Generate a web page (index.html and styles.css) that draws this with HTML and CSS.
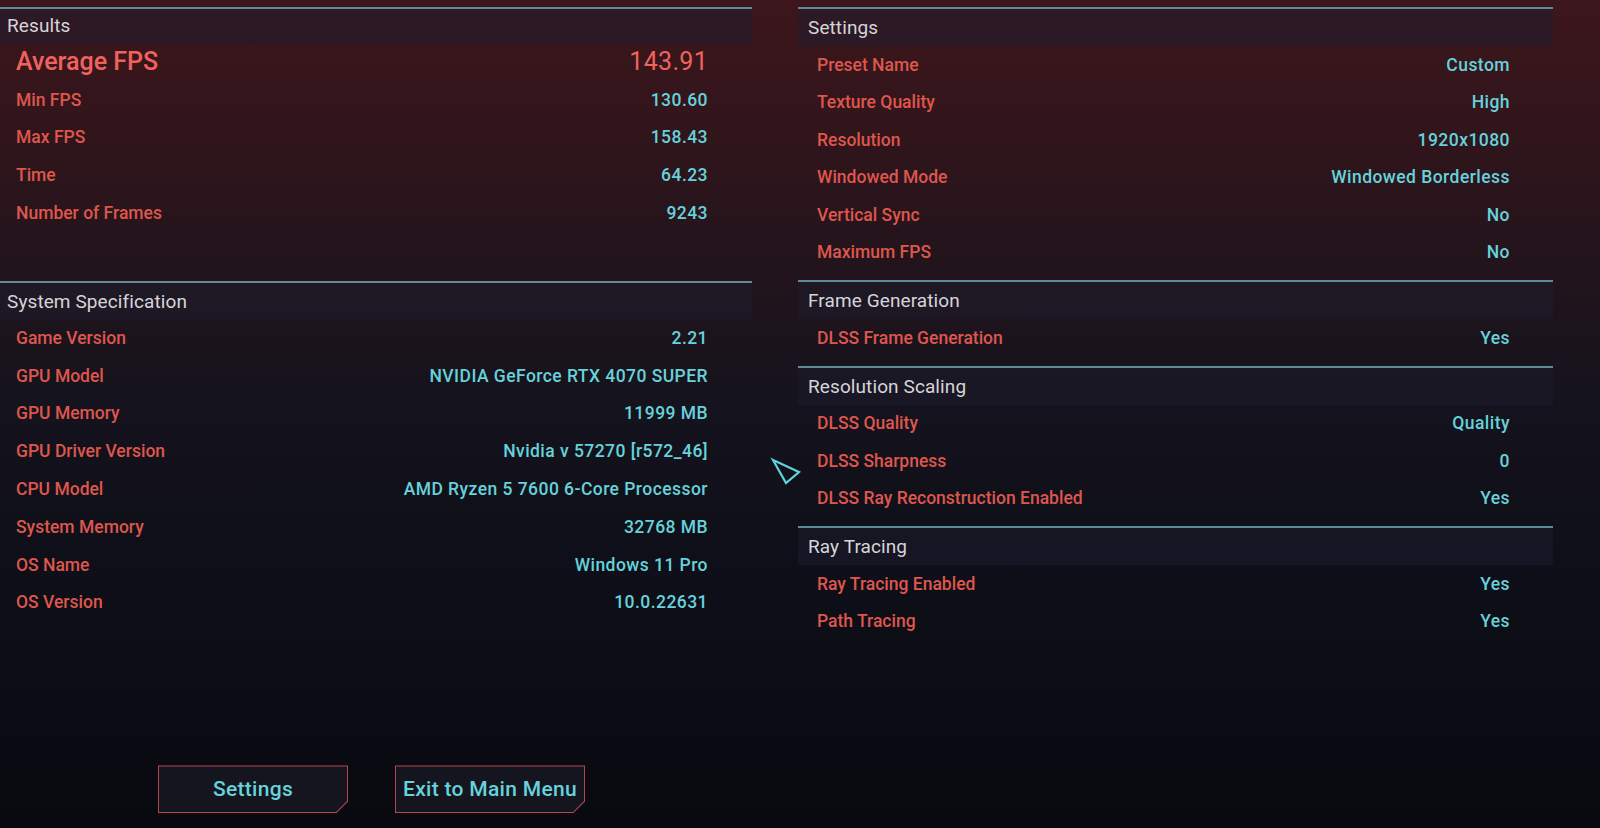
FILE: index.html
```html
<!DOCTYPE html>
<html lang="en">
<head>
    <meta charset="UTF-8">
    <title>Benchmark Results</title>
    <link rel="stylesheet" href="styles.css">
</head>
<body>

    <div class="screen">

        <!-- Left column: results + system spec -->
        <div class="column column-left">
            <section class="panel panel-results">
                <h2 class="panel-title">Results</h2>
                <div class="row row-main"><span class="label">Average FPS</span><span class="value">143.91</span></div>
                <div class="row"><span class="label">Min FPS</span><span class="value">130.60</span></div>
                <div class="row"><span class="label">Max FPS</span><span class="value">158.43</span></div>
                <div class="row"><span class="label">Time</span><span class="value">64.23</span></div>
                <div class="row"><span class="label">Number of Frames</span><span class="value">9243</span></div>
            </section>

            <section class="panel">
                <h2 class="panel-title">System Specification</h2>
                <div class="row"><span class="label">Game Version</span><span class="value">2.21</span></div>
                <div class="row"><span class="label">GPU Model</span><span class="value">NVIDIA GeForce RTX 4070 SUPER</span></div>
                <div class="row"><span class="label">GPU Memory</span><span class="value">11999 MB</span></div>
                <div class="row"><span class="label">GPU Driver Version</span><span class="value">Nvidia v 57270 [r572_46]</span></div>
                <div class="row"><span class="label">CPU Model</span><span class="value">AMD Ryzen 5 7600 6-Core Processor</span></div>
                <div class="row"><span class="label">System Memory</span><span class="value">32768 MB</span></div>
                <div class="row"><span class="label">OS Name</span><span class="value">Windows 11 Pro</span></div>
                <div class="row"><span class="label">OS Version</span><span class="value">10.0.22631</span></div>
            </section>

            <div class="actions">
                <button class="cut-btn"><span class="cut-btn-inner">Settings</span></button>
                <button class="cut-btn"><span class="cut-btn-inner">Exit to Main Menu</span></button>
            </div>
        </div>

        <!-- Right column: settings used -->
        <div class="column column-right">
            <section class="panel">
                <h2 class="panel-title">Settings</h2>
                <div class="row"><span class="label">Preset Name</span><span class="value">Custom</span></div>
                <div class="row"><span class="label">Texture Quality</span><span class="value">High</span></div>
                <div class="row"><span class="label">Resolution</span><span class="value">1920x1080</span></div>
                <div class="row"><span class="label">Windowed Mode</span><span class="value">Windowed Borderless</span></div>
                <div class="row"><span class="label">Vertical Sync</span><span class="value">No</span></div>
                <div class="row"><span class="label">Maximum FPS</span><span class="value">No</span></div>
            </section>

            <section class="panel">
                <h2 class="panel-title">Frame Generation</h2>
                <div class="row"><span class="label">DLSS Frame Generation</span><span class="value">Yes</span></div>
            </section>

            <section class="panel">
                <h2 class="panel-title">Resolution Scaling</h2>
                <div class="row"><span class="label">DLSS Quality</span><span class="value">Quality</span></div>
                <div class="row"><span class="label">DLSS Sharpness</span><span class="value">0</span></div>
                <div class="row"><span class="label">DLSS Ray Reconstruction Enabled</span><span class="value">Yes</span></div>
            </section>

            <section class="panel">
                <h2 class="panel-title">Ray Tracing</h2>
                <div class="row"><span class="label">Ray Tracing Enabled</span><span class="value">Yes</span></div>
                <div class="row"><span class="label">Path Tracing</span><span class="value">Yes</span></div>
            </section>
        </div>

        <!-- Mouse cursor -->
        <svg class="cursor" width="34" height="32" viewBox="0 0 34 32">
            <polygon points="3,3 29,15 16,26" fill="none" stroke="#62d3dc" stroke-width="2.2" stroke-linejoin="miter"/>
        </svg>
    </div>

</body>
</html>
```

FILE: styles.css
```css
/* Base */
* {
    box-sizing: border-box;
}

body {
    margin: 0;
    height: 828px;
    overflow: hidden;
    font-family: Roboto, 'Liberation Sans', sans-serif;
    background: linear-gradient(to bottom, #3c161c 0px, #32151b 120px, #23141c 260px, #15131d 400px, #0e0f18 560px, #090a10 828px);
}

.screen {
    position: relative;
    display: flex;
    height: 828px;
    padding-top: 7px;
}

.column-left {
    width: 752px;
}

.column-right {
    width: 755px;
    margin-left: 46px;
}

/* Panels */
.panel {
    border-top: 2px solid #5e8b96;
    padding-bottom: 9px;
}

.panel-results {
    height: 274px;
}

.panel-title {
    margin: 0;
    height: 37px;
    line-height: 37px;
    padding-left: 7px;
    font-size: 19px;
    font-weight: 400;
    letter-spacing: 0.1px;
    color: #d5d5d8;
    background: rgba(30, 28, 46, 0.5);
}

.panel-results .panel-title {
    height: 35px;
    line-height: 33px;
}

.column-left .panel-title + .row {
    margin-top: -1px;
}

.column-right .panel-title {
    padding-left: 10px;
}

.row {
    display: flex;
    justify-content: space-between;
    align-items: center;
    height: 37.8px;
    padding: 0 44px 0 16px;
    font-size: 17.5px;
    font-weight: 500;
}

.column-right .row {
    height: 37.5px;
    padding: 0 43px 0 19px;
}

.label {
    color: #df564d;
}

.value {
    color: #66d2db;
    letter-spacing: 0.45px;
}

.row-main .label {
    font-size: 25px;
    color: #f0625e;
}

.row-main .value {
    font-size: 25px;
    font-weight: 400;
    letter-spacing: 0.3px;
    color: #f0625e;
}

/* Buttons */
.actions {
    display: flex;
    gap: 47px;
    margin-top: 135px;
    padding-left: 158px;
}

.cut-btn {
    width: 190px;
    height: 48px;
    padding: 1px;
    border: none;
    background: #b4464c;
    cursor: pointer;
    clip-path: polygon(0 0, 100% 0, 100% calc(100% - 12px), calc(100% - 12px) 100%, 0 100%);
}

.cut-btn-inner {
    display: flex;
    align-items: center;
    justify-content: center;
    width: 100%;
    height: 100%;
    font-family: Roboto, 'Liberation Sans', sans-serif;
    font-size: 21px;
    font-weight: 500;
    letter-spacing: 0.3px;
    color: #66d2db;
    background: #14151e;
    clip-path: polygon(0 0, 100% 0, 100% calc(100% - 11.5px), calc(100% - 11.5px) 100%, 0 100%);
}

.cut-btn:hover {
    filter: brightness(1.15);
}

/* Cursor sits over everything */
.cursor {
    position: absolute;
    left: 770px;
    top: 457px;
}
```
